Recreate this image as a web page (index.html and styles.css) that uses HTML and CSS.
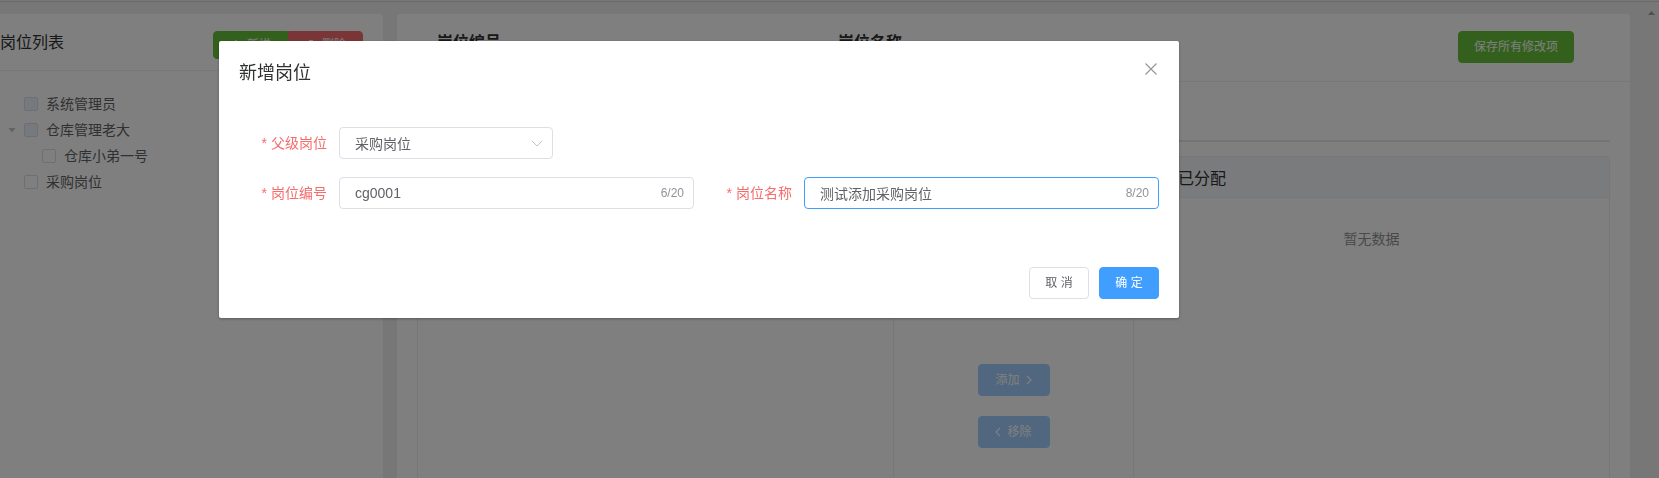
FILE: index.html
```html
<!DOCTYPE html>
<html lang="zh-CN">
<head>
<meta charset="utf-8">
<title>岗位管理</title>
<link rel="stylesheet" href="styles.css">
</head>
<body>
<div class="topline"></div>
<div class="page">
  <section class="card card-left">
    <header class="card-head head-left">
      <div class="head-row">
        <span class="card-title">岗位列表</span>
        <div class="btn-group">
          <button class="btn btn-mini btn-success"><svg class="ico" viewBox="0 0 12 12"><path d="M6 1v10M1 6h10" stroke="#fff" stroke-width="1.4" fill="none"/></svg>新增</button>
          <button class="btn btn-mini btn-danger"><svg class="ico" viewBox="0 0 12 12"><path d="M1.5 3h9M4.5 3V1.5h3V3M2.8 3.5l.6 7.5h5.2l.6-7.5M5 5v4.5M7 5v4.5" stroke="#fff" stroke-width="1.1" fill="none"/></svg>删除</button>
        </div>
      </div>
    </header>
    <div class="card-body">
      <ul class="tree">
        <li class="node"><span class="expander"></span><span class="cb cb-disabled"></span><span class="node-label">系统管理员</span></li>
        <li class="node"><span class="expander"><svg class="caret" viewBox="0 0 8 5"><polygon points="0.5,0 7.5,0 4,4.5" fill="#c0c4cc"/></svg></span><span class="cb cb-disabled"></span><span class="node-label">仓库管理老大</span></li>
        <li class="node lvl2"><span class="expander"></span><span class="cb"></span><span class="node-label">仓库小弟一号</span></li>
        <li class="node"><span class="expander"></span><span class="cb"></span><span class="node-label">采购岗位</span></li>
      </ul>
    </div>
  </section>

  <section class="card card-right">
    <header class="card-head head-right">
      <span class="field-label field-code">岗位编号</span>
      <span class="field-label">岗位名称</span>
      <button class="btn btn-small btn-success btn-save">保存所有修改项</button>
    </header>
    <div class="card-body body-right">
      <div class="tabs"><div class="tab tab-active">岗位人员</div></div>
      <div class="transfer">
        <div class="panel">
          <div class="panel-head"><span class="cb"></span><span class="panel-title">待分配</span></div>
          <div class="panel-body"></div>
        </div>
        <div class="transfer-btns">
          <button class="btn btn-small btn-primary-disabled btn-move">添加<svg class="chev" viewBox="0 0 6 10"><polyline points="1,1 5,5 1,9" stroke="#fff" stroke-width="1.2" fill="none"/></svg></button>
          <button class="btn btn-small btn-primary-disabled btn-move"><svg class="chev chev-left" viewBox="0 0 6 10"><polyline points="5,1 1,5 5,9" stroke="#fff" stroke-width="1.2" fill="none"/></svg>移除</button>
        </div>
        <div class="panel">
          <div class="panel-head"><span class="cb"></span><span class="panel-title">已分配</span></div>
          <div class="panel-body"><p class="empty">暂无数据</p></div>
        </div>
      </div>
    </div>
  </section>

  <div class="vscroll"><svg class="vscroll-arrow" viewBox="0 0 7 4"><polygon points="3.5,0 7,4 0,4" fill="#a0a0a0"/></svg></div>
</div>

<div class="overlay"></div>

<div class="dialog" role="dialog">
  <div class="dlg-head">
    <span class="dlg-title">新增岗位</span>
    <button class="dlg-close" aria-label="关闭"><svg viewBox="0 0 16 16"><path d="M2.5 2.5l11 11M13.5 2.5l-11 11" stroke="#909399" stroke-width="1.1" fill="none"/></svg></button>
  </div>
  <div class="dlg-body">
    <div class="form-row">
      <div class="form-item">
        <label class="f-label"><span class="req">*</span>父级岗位</label>
        <div class="select">
          <span class="val">采购岗位</span>
          <svg class="select-arrow" viewBox="0 0 12 7"><polyline points="0.8,0.8 6,6 11.2,0.8" stroke="#c0c4cc" stroke-width="1" fill="none"/></svg>
        </div>
      </div>
    </div>
    <div class="form-row">
      <div class="form-item">
        <label class="f-label"><span class="req">*</span>岗位编号</label>
        <div class="input"><span class="val">cg0001</span><span class="count">6/20</span></div>
      </div>
      <div class="form-item">
        <label class="f-label"><span class="req">*</span>岗位名称</label>
        <div class="input input-focus"><span class="val">测试添加采购岗位</span><span class="count">8/20</span></div>
      </div>
    </div>
  </div>
  <div class="dlg-foot">
    <button class="btn btn-small btn-foot">取 消</button>
    <button class="btn btn-small btn-primary btn-foot">确 定</button>
  </div>
</div>
</body>
</html>
```

FILE: styles.css
```css
* { box-sizing: border-box; }

html, body {
  margin: 0;
  height: 100%;
  overflow: hidden;
}

body {
  background: #eeeeee;
  font-family: "Liberation Sans", "Noto Sans CJK SC", sans-serif;
  font-size: 14px;
  color: #606266;
}

.topline {
  height: 1px;
  margin-top: 1px;
  background: #d4d4d4;
}

.page {
  display: flex;
  gap: 12px;
  padding-top: 11px;
  margin-left: -21px;
}

/* cards */
.card {
  flex: none;
  height: 720px;
  background: #fff;
  border: 1px solid #ebeef5;
  border-radius: 4px;
}

.card-left { width: 405px; }
.card-right { width: 1235px; }

.card-head { border-bottom: 1px solid #ebeef5; }

.head-left { padding: 17px 20px 19px; }

.head-row {
  display: flex;
  justify-content: space-between;
  align-items: flex-start;
  height: 20px;
}

.card-title {
  font-size: 16px;
  line-height: 24px;
  color: #303133;
}

.card-body { padding: 20px; }

/* buttons */
.btn {
  font-family: inherit;
  font-size: 12px;
  line-height: 1;
  display: inline-flex;
  align-items: center;
  justify-content: center;
  padding: 0 15px;
  border: 1px solid #dcdfe6;
  border-radius: 4px;
  background: #fff;
  color: #606266;
  cursor: pointer;
  white-space: nowrap;
}

.btn-mini { height: 28px; padding: 0 16px; }
.btn-small { height: 32px; }

.btn-success { background: #67c23a; border-color: #67c23a; color: #fff; }
.btn-danger { background: #f56c6c; border-color: #f56c6c; color: #fff; }
.btn-primary { background: #409eff; border-color: #409eff; color: #fff; }
.btn-primary-disabled { background: #a0cfff; border-color: #a0cfff; color: #fff; }

.btn-group { display: flex; }
.btn-group .btn { border-radius: 0; }
.btn-group .btn:first-child { border-radius: 4px 0 0 4px; }
.btn-group .btn:last-child { border-radius: 0 4px 4px 0; }

.ico { width: 12px; height: 12px; margin-right: 5px; }

/* tree */
.tree {
  list-style: none;
  margin: 0;
  padding: 0;
}

.node {
  display: flex;
  align-items: center;
  height: 26px;
}

.node.lvl2 { padding-left: 18px; }

.expander {
  width: 24px;
  height: 26px;
  display: flex;
  align-items: center;
  justify-content: center;
}

.caret { width: 8px; height: 5px; }

.cb {
  flex: none;
  width: 14px;
  height: 14px;
  border: 1px solid #dcdfe6;
  border-radius: 2px;
  background: #fff;
  margin-right: 8px;
}

.cb-disabled { background: #edf2fc; }

.node-label { line-height: 26px; }

/* right card */
.head-right {
  display: flex;
  align-items: flex-start;
  padding: 17px 56px 18px 40px;
}

.field-label {
  font-size: 16px;
  line-height: 24px;
  font-weight: bold;
  color: #303133;
}

.field-code { width: 401px; }

.btn-save { margin-left: auto; width: 116px; }

.tabs {
  position: relative;
  height: 40px;
  margin-bottom: 14px;
}

.tabs::after {
  content: "";
  position: absolute;
  left: 0;
  right: 0;
  bottom: 0;
  height: 2px;
  background: #e4e7ed;
}

.tab {
  display: inline-block;
  height: 40px;
  line-height: 40px;
  padding: 0 20px 0 0;
  color: #303133;
}

.tab-active { color: #409eff; }

.transfer {
  display: flex;
  height: 500px;
}

.panel {
  width: 477px;
  flex: none;
  border: 1px solid #ebeef5;
  border-radius: 4px;
  background: #fff;
  overflow: hidden;
}

.panel-head {
  height: 41px;
  background: #f5f7fa;
  border-bottom: 1px solid #ebeef5;
  display: flex;
  align-items: center;
  padding-left: 15px;
}

.panel-head .cb { margin-right: 15px; }

.panel-title {
  font-size: 16px;
  color: #303133;
}

.empty {
  margin: 0;
  padding-top: 30px;
  line-height: 22px;
  text-align: center;
  color: #909399;
}

.transfer-btns {
  width: 239px;
  flex: none;
  display: flex;
  flex-direction: column;
  align-items: center;
  justify-content: center;
  gap: 20px;
}

.btn-move { width: 72px; }

.chev { width: 6px; height: 10px; margin-left: 6px; }
.chev-left { margin-left: 0; margin-right: 6px; }

.vscroll {
  flex: 1;
  margin-top: -11px;
  padding-top: 9px;
  display: flex;
  justify-content: center;
  align-items: flex-start;
}

.vscroll-arrow { width: 7px; height: 4px; }

/* overlay + dialog */
.overlay {
  position: fixed;
  inset: 0;
  background: rgba(0, 0, 0, 0.5);
}

.dialog {
  position: fixed;
  left: 219px;
  top: 41px;
  width: 960px;
  background: #fff;
  border-radius: 2px;
  box-shadow: 0 1px 3px rgba(0, 0, 0, 0.3);
}

.dlg-head {
  position: relative;
  padding: 20px 20px 10px;
}

.dlg-title {
  display: block;
  font-size: 18px;
  line-height: 24px;
  color: #303133;
}

.dlg-close {
  position: absolute;
  top: 20px;
  right: 20px;
  width: 16px;
  height: 16px;
  padding: 0;
  border: 0;
  background: none;
  cursor: pointer;
}

.dlg-close svg { width: 16px; height: 16px; display: block; }

.dlg-body { padding: 32px 20px 30px; }

.form-row {
  display: grid;
  grid-template-columns: 455px 455px;
  column-gap: 10px;
  margin-bottom: 18px;
}

.form-item {
  display: flex;
  align-items: center;
}

.f-label {
  flex: none;
  width: 100px;
  padding-right: 12px;
  text-align: right;
  line-height: 32px;
  color: #f56c6c;
}

.req { margin-right: 4px; }

.select {
  width: 214px;
  height: 32px;
  border: 1px solid #dcdfe6;
  border-radius: 4px;
  display: flex;
  align-items: center;
  justify-content: space-between;
  padding: 0 9px 0 15px;
}

.select-arrow { width: 12px; height: 7px; }

.input {
  flex: 1;
  height: 32px;
  border: 1px solid #dcdfe6;
  border-radius: 4px;
  display: flex;
  align-items: center;
  padding: 0 9px 0 15px;
}

.input-focus { border-color: #409eff; }

.val { flex: 1; color: #606266; }

.count {
  font-size: 12px;
  color: #909399;
}

.dlg-foot {
  display: flex;
  justify-content: flex-end;
  gap: 10px;
  padding: 10px 20px 19px;
}

.btn-foot { width: 60px; }
```
